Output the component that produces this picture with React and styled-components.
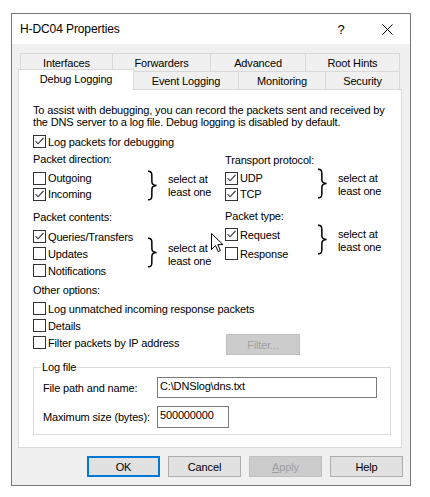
import React from "react";
import styled, { createGlobalStyle } from "styled-components";

const GlobalStyle = createGlobalStyle`
  body {
    margin: 0;
    background: #ffffff;
    font-family: "Liberation Sans", Arial, sans-serif;
    font-size: 11px;
    letter-spacing: -0.15px;
    color: #000000;
  }
`;

const Window = styled.div`
  box-sizing: border-box;
  margin: 13px 0 0 11px;
  width: 400px;
  height: 473px;
  border: 1px solid #777777;
  display: flex;
  flex-direction: column;
  background: #f0f0f0;
`;

const TitleBar = styled.div`
  height: 30px;
  flex: none;
  background: #ffffff;
  display: flex;
  align-items: center;
  padding-left: 8px;
  font-size: 12px;
  letter-spacing: -0.1px;
`;

const Title = styled.span`
  flex: 1;
`;

const TitleButton = styled.span`
  width: 46px;
  display: flex;
  justify-content: center;
  align-items: center;
  font-size: 13px;
`;

const Body = styled.div`
  padding: 9px 0 0 6px;
`;

const TabRow = styled.div`
  display: flex;
  align-items: flex-end;
  height: ${(p) => p.$h}px;
  margin-left: ${(p) => p.$ml || 0}px;
  margin-top: ${(p) => p.$mt || 0}px;
  position: relative;
  z-index: ${(p) => (p.$front ? 2 : 1)};
`;

const Tab = styled.div`
  box-sizing: border-box;
  width: ${(p) => p.$w}px;
  height: ${(p) => (p.$active ? 21 : 18)}px;
  margin-bottom: ${(p) => (p.$active ? -1 : 0)}px;
  border-top: 1px solid #d9d9d9;
  border-left: ${(p) => (p.$left ? "1px solid #d9d9d9" : "none")};
  border-right: ${(p) => (p.$right ? "1px solid #d9d9d9" : "none")};
  background: ${(p) => (p.$active ? "#ffffff" : "#f0f0f0")};
  display: flex;
  align-items: center;
  justify-content: center;
  padding-bottom: ${(p) => (p.$active ? 3 : 0)}px;
  white-space: nowrap;
`;

const Panel = styled.div`
  position: relative;
  box-sizing: border-box;
  width: 384px;
  height: 359px;
  background: #ffffff;
  border: 1px solid #d9d9d9;
  padding-left: 14px;
`;

const Description = styled.p`
  margin: 14px 0 0;
  line-height: 12px;
  white-space: nowrap;
`;

const Row = styled.div`
  display: flex;
  align-items: center;
  height: ${(p) => p.$h || 16}px;
  margin-top: ${(p) => p.$mt || 0}px;
  white-space: nowrap;
`;

const Columns = styled.div`
  display: grid;
  grid-template-columns: 192px 1fr;
`;

const Section = styled.div`
  margin-top: ${(p) => p.$mt || 0}px;
`;

const SectionBody = styled.div`
  display: flex;
  margin-top: ${(p) => p.$mt || 0}px;
`;

const OptionList = styled.div`
  width: ${(p) => p.$w}px;
  flex: none;
`;

const BraceNote = styled.div`
  display: flex;
  align-items: flex-start;
`;

const BraceSvg = styled.svg`
  margin-top: ${(p) => p.$mt}px;
  flex: none;
`;

const Note = styled.div`
  margin: ${(p) => p.$mt}px 0 0 10px;
  line-height: 13px;
`;

const Box = styled.span`
  box-sizing: border-box;
  width: 13px;
  height: 13px;
  flex: none;
  border: 1px solid #333333;
  background: #ffffff;
  display: flex;
  margin-right: 2px;
`;

const CheckLabel = styled.label`
  display: flex;
  align-items: center;
  width: ${(p) => (p.$w ? `${p.$w}px` : "auto")};
  height: 17px;
  white-space: nowrap;
`;

const FilterRow = styled.div`
  display: flex;
  align-items: flex-start;
  height: 21px;
`;

const Button = styled.button`
  box-sizing: border-box;
  width: ${(p) => p.$w || 73}px;
  height: 21px;
  padding: 0;
  font-family: "Liberation Sans", Arial, sans-serif;
  font-size: 11px;
  letter-spacing: -0.15px;
  color: ${(p) => (p.$disabled ? "#a0a0a0" : "#000000")};
  background: ${(p) => (p.$disabled ? "#cccccc" : "#e1e1e1")};
  border: ${(p) =>
    p.$primary
      ? "2px solid #0078d7"
      : p.$disabled
      ? "1px solid #bfbfbf"
      : "1px solid #adadad"};
`;

const Group = styled.fieldset`
  box-sizing: border-box;
  margin: 6px 0 0;
  width: 358px;
  padding: 0 0 6px 9px;
  border: 1px solid #dcdcdc;
`;

const Legend = styled.legend`
  padding: 0 1px;
  margin-left: -2px;
  line-height: 13px;
`;

const FieldRow = styled.div`
  display: flex;
  align-items: center;
  margin-top: ${(p) => p.$mt}px;
`;

const FieldLabel = styled.span`
  width: 114px;
  flex: none;
`;

const TextInput = styled.div`
  box-sizing: border-box;
  width: ${(p) => p.$w}px;
  height: ${(p) => p.$h}px;
  border: 1px solid #7a7a7a;
  padding: 1px 0 0 2px;
  font-size: 11px;
  line-height: 15px;
`;

const ButtonBar = styled.div`
  display: flex;
  justify-content: flex-end;
  gap: 8px;
  margin-top: 8px;
  padding-right: 7px;
`;

const Cursor = styled.svg`
  position: absolute;
  left: 192px;
  top: 143px;
`;

const Underline = styled.span`
  text-decoration: underline;
`;

const Check = ({ checked, label, w }) => (
  <CheckLabel $w={w}>
    <Box>
      {checked && (
        <svg width="11" height="11" viewBox="0 0 11 11">
          <polyline points="1.5,5 4,7.8 9.5,2" fill="none" stroke="#333" strokeWidth="1.1" />
        </svg>
      )}
    </Box>
    {label}
  </CheckLabel>
);

const Brace = ({ mt }) => (
  <BraceSvg $mt={mt} width="11" height="31" viewBox="0 0 11 31">
    <path
      d="M1 1.2 Q4.6 1 4.8 4.5 L4.9 12 Q5 15.2 9.5 15.5 Q5 15.8 4.9 19 L4.8 26.5 Q4.6 30 1 29.8"
      fill="none"
      stroke="#000"
      strokeWidth="1.5"
    />
  </BraceSvg>
);

const Choice = ({ title, items, listW, rowH = 17, bodyMt, braceMt, noteMt, mt, labelMt }) => (
  <Section $mt={mt}>
    <Row $mt={labelMt}>{title}</Row>
    <SectionBody $mt={bodyMt}>
      <OptionList $w={listW}>
        {items.map(([text, on]) => (
          <Row key={text} $h={rowH}>
            <Check label={text} checked={on} />
          </Row>
        ))}
      </OptionList>
      <BraceNote>
        <Brace mt={braceMt} />
        <Note $mt={noteMt}>
          select at
          <br />
          least one
        </Note>
      </BraceNote>
    </SectionBody>
  </Section>
);

export default function App() {
  return (
    <>
      <GlobalStyle />
      <Window>
        <TitleBar>
          <Title>H-DC04 Properties</Title>
          <TitleButton>?</TitleButton>
          <TitleButton>
            <svg width="11" height="11" viewBox="0 0 11 11">
              <path d="M0.5 0.5 L10.5 10.5 M10.5 0.5 L0.5 10.5" stroke="#000" strokeWidth="1" />
            </svg>
          </TitleButton>
        </TitleBar>
        <Body>
          <TabRow $h={18} $ml={2}>
            <Tab $w={92} $left>Interfaces</Tab>
            <Tab $w={98} $left>Forwarders</Tab>
            <Tab $w={95} $left>Advanced</Tab>
            <Tab $w={95} $left $right>Root Hints</Tab>
          </TabRow>
          <TabRow $h={20} $mt={-2} $front>
            <Tab $w={116} $left $right $active>Debug Logging</Tab>
            <Tab $w={105} $right>Event Logging</Tab>
            <Tab $w={87} $right>Monitoring</Tab>
            <Tab $w={74} $right>Security</Tab>
          </TabRow>
          <Panel>
            <Description>
              To assist with debugging, you can record the packets sent and received by
              <br />
              the DNS server to a log file. Debug logging is disabled by default.
            </Description>
            <Row $h={17} $mt={5}>
              <Check label="Log packets for debugging" checked />
            </Row>
            <Columns>
              <div>
                <Choice
                  title="Packet direction:"
                  items={[["Outgoing", false], ["Incoming", true]]}
                  listW={114}
                  rowH={16}
                  labelMt={1}
                  bodyMt={3}
                  braceMt={0}
                  noteMt={3}
                />
                <Choice
                  title="Packet contents:"
                  items={[["Queries/Transfers", true], ["Updates", false], ["Notifications", false]]}
                  listW={114}
                  rowH={17}
                  mt={7}
                  bodyMt={3}
                  braceMt={9}
                  noteMt={14}
                />
              </div>
              <div>
                <Choice
                  title="Transport protocol:"
                  items={[["UDP", true], ["TCP", true]]}
                  listW={92}
                  rowH={16}
                  labelMt={2}
                  bodyMt={2}
                  braceMt={-2}
                  noteMt={2}
                />
                <Choice
                  title="Packet type:"
                  items={[["Request", true], ["Response", false]]}
                  listW={92}
                  rowH={19}
                  mt={6}
                  bodyMt={1}
                  braceMt={-1}
                  noteMt={3}
                />
              </div>
            </Columns>
            <Row $mt={3}>Other options:</Row>
            <Row $h={17} $mt={2}>
              <Check label="Log unmatched incoming response packets" />
            </Row>
            <Row $h={17}>
              <Check label="Details" />
            </Row>
            <FilterRow>
              <Check label="Filter packets by IP address" w={193} />
              <Button $w={74} $disabled>Filter...</Button>
            </FilterRow>
            <Group>
              <Legend>Log file</Legend>
              <FieldRow $mt={3}>
                <FieldLabel>File path and name:</FieldLabel>
                <TextInput $w={220} $h={21}>C:\DNSlog\dns.txt</TextInput>
              </FieldRow>
              <FieldRow $mt={8}>
                <FieldLabel>Maximum size (bytes):</FieldLabel>
                <TextInput $w={72} $h={22}>500000000</TextInput>
              </FieldRow>
            </Group>
            <Cursor width="13" height="20" viewBox="0 0 13 20">
              <path
                d="M0.5 0.5 L0.5 16.5 L4.5 12.5 L7.2 18.6 L9.4 17.6 L6.8 11.6 L12 11.6 Z"
                fill="#ffffff"
                stroke="#000000"
                strokeWidth="1"
              />
            </Cursor>
          </Panel>
          <ButtonBar>
            <Button $primary>OK</Button>
            <Button>Cancel</Button>
            <Button $disabled>
              <Underline>A</Underline>pply
            </Button>
            <Button>Help</Button>
          </ButtonBar>
        </Body>
      </Window>
    </>
  );
}
